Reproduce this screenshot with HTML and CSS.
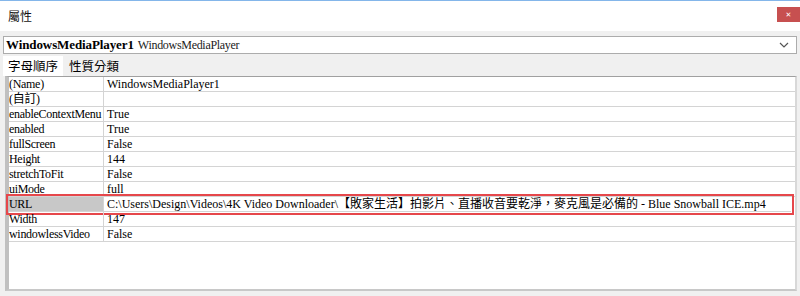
FILE: index.html
```html
<!DOCTYPE html>
<html lang="zh-Hant">
<head>
  <meta charset="UTF-8" />
  <title>屬性</title>
  <link rel="stylesheet" href="styles.css">
</head>
<body>
  <div class="titlebar">
    <span class="title">屬性</span>
    <span class="close">&#x2715;</span>
  </div>

  <div class="panel">
    <div class="combo">
      <span class="combo-name">WindowsMediaPlayer1</span>
      <span class="combo-type">WindowsMediaPlayer</span>
      <svg class="combo-arrow" width="10" height="6" viewBox="0 0 10 6">
        <path d="M1 1 L5 5 L9 1" fill="none" stroke="#555" stroke-width="1.2"/>
      </svg>
    </div>

    <div class="tabs">
      <span class="tab active">字母順序</span>
      <span class="tab">性質分類</span>
    </div>

    <div class="grid">
      <div class="row"><span class="name">(Name)</span><span class="value">WindowsMediaPlayer1</span></div>
      <div class="row"><span class="name">(自訂)</span><span class="value"></span></div>
      <div class="row"><span class="name">enableContextMenu</span><span class="value">True</span></div>
      <div class="row"><span class="name">enabled</span><span class="value">True</span></div>
      <div class="row"><span class="name">fullScreen</span><span class="value">False</span></div>
      <div class="row"><span class="name">Height</span><span class="value">144</span></div>
      <div class="row"><span class="name">stretchToFit</span><span class="value">False</span></div>
      <div class="row"><span class="name">uiMode</span><span class="value">full</span></div>
      <div class="row selected"><span class="name">URL</span><span class="value">C:\Users\Design\Videos\4K Video Downloader\【敗家生活】拍影片、直播收音要乾淨，麥克風是必備的 - Blue Snowball ICE.mp4</span></div>
      <div class="row"><span class="name">Width</span><span class="value">147</span></div>
      <div class="row"><span class="name">windowlessVideo</span><span class="value">False</span></div>
      <div class="empty"></div>
    </div>
  </div>
</body>
</html>
```

FILE: styles.css
```css
body {
  margin: 0;
  background: #f0f0f0;
  font-family: "Liberation Serif", "Noto Sans CJK TC", serif;
  font-size: 12px;
  color: #000;
  width: 800px;
  height: 296px;
  overflow: hidden;
}

.titlebar {
  height: 31px;
  background: #fff;
  border-top: 1px solid #84b6ea;
  box-sizing: border-box;
  display: flex;
  align-items: flex-start;
  justify-content: space-between;
}

.title {
  font-family: "Noto Sans CJK TC", sans-serif;
  font-size: 12px;
  margin: 6px 0 0 8px;
  color: #111;
}

.close {
  width: 23px;
  height: 15px;
  margin-top: 6px;
  background: #c75050;
  color: #fff;
  font-family: "DejaVu Sans", sans-serif;
  font-size: 7px;
  font-weight: bold;
  display: flex;
  align-items: center;
  justify-content: center;
}

.panel {
  padding: 5px 3px 3px 3px;
}

.combo {
  height: 16px;
  background: #fff;
  border: 1px solid #acacac;
  display: flex;
  align-items: center;
  padding: 0 4px 0 2px;
  gap: 4px;
}

.combo-name {
  font-weight: bold;
  font-size: 13px;
  letter-spacing: -0.1px;
}

.combo-type {
  flex: 1;
  font-size: 12px;
  letter-spacing: -0.3px;
  color: #222;
}

.combo-arrow {
  margin-right: 3px;
}

.tabs {
  display: flex;
  height: 20px;
  margin-top: 2px;
}

.tab {
  font-family: "Noto Sans CJK TC", sans-serif;
  font-size: 12.5px;
  line-height: 20px;
  padding: 0 5px;
  margin-right: 1px;
}

.tab.active {
  background: #fff;
}

.grid {
  margin: 0 0 0 2px;
  height: 215px;
  background: #fff;
  border: 1px solid #a0a0a0;
  border-left: 4px solid #c0c0c0;
  border-right: 2px solid #d8d8d8;
  border-bottom: 2px solid #c8c8c8;
  box-sizing: border-box;
  display: flex;
  flex-direction: column;
}

.row {
  display: flex;
  height: 15px;
  line-height: 15px;
  border-bottom: 1px solid #d4d4d4;
  box-sizing: border-box;
}

.row .name {
  width: 94px;
  border-right: 1px solid #d4d4d4;
  white-space: nowrap;
  overflow: hidden;
  letter-spacing: -0.3px;
}

.row .value {
  flex: 1;
  padding-left: 3px;
  white-space: nowrap;
  overflow: hidden;
}

.row.selected {
  outline: 2px solid #e6474b;
  outline-offset: 1px;
  margin-right: 4px;
}

.row.selected .name {
  background: #c8c8c8;
}

.empty {
  flex: 1;
}
```
